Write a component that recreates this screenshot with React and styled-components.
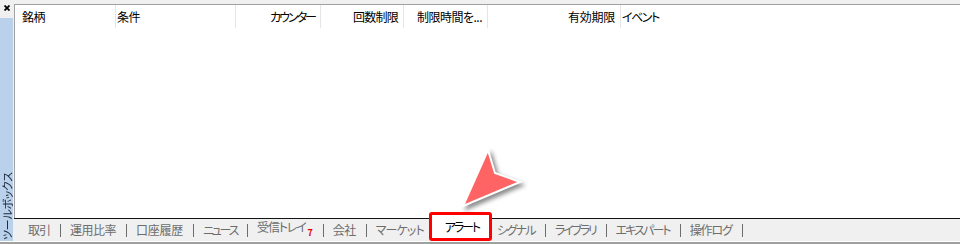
import React from 'react'
import styled, { createGlobalStyle } from 'styled-components';

const GlobalStyle = createGlobalStyle`
  html, body {
    margin: 0;
    padding: 0;
    background: #ffffff;
  }
`;

const Window = styled.div`
  position: relative;
  width: 960px;
  height: 244px;
  display: flex;
  flex-direction: column;
  background: #f0f0f0;
  font-family: "Noto Sans CJK JP", "Noto Sans", sans-serif;
  font-size: 12px;
  font-feature-settings: "palt" 1;
  overflow: hidden;
`;

const Body = styled.div`
  flex: 1;
  display: flex;
  min-height: 0;
`;

const BottomEdge = styled.div`
  height: 1px;
  background: #ffffff;
  border-bottom: 2px solid #a0a0a0;
`;

/* 左のツールボックスのタイトルバー */
const Sidebar = styled.div`
  width: 14px;
  display: flex;
  flex-direction: column;
`;

const CloseBtn = styled.div`
  height: 18px;
  padding: 5px 0 0 4px;
  box-sizing: border-box;
  display: flex;
  align-items: flex-start;
`;

const SideStrip = styled.div`
  flex: 1;
  width: 13px;
  background: #b9d1ea;
  display: flex;
  flex-direction: column;
  justify-content: flex-end;
  align-items: center;
`;

const SideTitle = styled.span`
  writing-mode: vertical-rl;
  text-orientation: sideways;
  transform: rotate(180deg);
  font-size: 11px;
  line-height: 12px;
  letter-spacing: -0.3px;
  color: #1b2738;
  padding-top: 1px;
`;

const Main = styled.div`
  flex: 1;
  display: flex;
  flex-direction: column;
`;

const TopStrip = styled.div`
  height: 4px;
`;

const Content = styled.div`
  flex: 1;
  background: #ffffff;
  border-top: 1px solid #a0a0a0;
  border-left: 1px solid #a0a0a0;
`;

const HeaderRow = styled.div`
  display: flex;
  height: 23px;
`;

const HeaderCell = styled.div`
  box-sizing: border-box;
  width: ${p => (p.w ? p.w + 'px' : 'auto')};
  flex: ${p => (p.w ? 'none' : 1)};
  display: flex;
  align-items: center;
  justify-content: ${p => (p.right ? 'flex-end' : 'flex-start')};
  padding: ${p => (p.right ? '0 5px 0 0' : `0 0 0 ${p.pl || 1}px`)};
  border-right: ${p => (p.w ? '1px solid #e5e5e5' : 'none')};
  letter-spacing: ${p => p.ls}px;
  color: #000000;
  white-space: nowrap;
  overflow: hidden;
`;

const TabBar = styled.div`
  height: 22px;
  border-top: 1px solid #141414;
  display: flex;
  align-items: center;
  padding-left: 14px;
`;

const Tab = styled.span`
  color: #6d6d6d;
  white-space: nowrap;
  line-height: 22px;
  letter-spacing: ${p => p.ls}px;
`;

const Sep = styled.span`
  width: 1px;
  height: 13px;
  background: #6d6d6d;
  margin: 0 9px 0 10px;
`;

const ActiveTab = styled.span`
  align-self: flex-start;
  box-sizing: border-box;
  height: 29px;
  margin: -7px 5px 0 5px;
  padding: 0 10px 0 13px;
  display: flex;
  align-items: center;
  background: #ffffff;
  border: 3px solid #ff0000;
  border-radius: 3px;
  color: #000000;
  letter-spacing: ${p => p.ls}px;
  white-space: nowrap;
`;

const Badge = styled.span`
  color: #e00000;
  font-size: 9px;
  font-weight: bold;
  letter-spacing: 0;
  vertical-align: -4px;
  margin-left: 2px;
`;

const Pointer = styled.svg`
  position: absolute;
  left: 455px;
  top: 145px;
  width: 75px;
  height: 70px;
  overflow: visible;
  filter: drop-shadow(3px 3px 2px rgba(0, 0, 0, 0.45));
`;

const columns = [
  { label: '銘柄', w: 101, pl: 7, ls: -0.5 },
  { label: '条件', w: 120, ls: -0.5 },
  { label: 'カウンター', w: 85, right: true, ls: -2 },
  { label: '回数制限', w: 83, right: true, ls: -0.75 },
  { label: '制限時間を...', w: 84, right: true, ls: -0.5 },
  { label: '有効期限', w: 133, right: true, ls: -0.25 },
  { label: 'イベント', ls: -1.5 },
];

const leftTabs = [
  { label: '取引', ls: -1 },
  { label: '運用比率', ls: -0.5 },
  { label: '口座履歴', ls: -0.25 },
  { label: 'ニュース', ls: -2.3 },
  { label: '受信トレイ', ls: -1.2, badge: 7 },
  { label: '会社', ls: -0.5 },
  { label: 'マーケット', ls: -0.9 },
];

const rightTabs = [
  { label: 'シグナル', ls: -1.7 },
  { label: 'ライブラリ', ls: -2.2 },
  { label: 'エキスパート', ls: -1.9 },
  { label: '操作ログ', ls: -1.2 },
];

function App() {
  return (
    <Window>
      <GlobalStyle />
      <Body>
        <Sidebar>
          <CloseBtn>
            <svg width="6" height="6" viewBox="0 0 6 6">
              <path d="M0.5 0.5 L5.5 5.5 M5.5 0.5 L0.5 5.5" stroke="#000" strokeWidth="1.8" />
            </svg>
          </CloseBtn>
          <SideStrip>
            <SideTitle>ツールボックス</SideTitle>
          </SideStrip>
        </Sidebar>
        <Main>
          <TopStrip />
          <Content>
            <HeaderRow>
              {columns.map(c => (
                <HeaderCell key={c.label} w={c.w} right={c.right} pl={c.pl} ls={c.ls}>
                  {c.label}
                </HeaderCell>
              ))}
            </HeaderRow>
          </Content>
          <TabBar>
            {leftTabs.map((t, i) => (
              <React.Fragment key={t.label}>
                <Tab ls={t.ls}>
                  {t.label}
                  {t.badge && <Badge>{t.badge}</Badge>}
                </Tab>
                {i < leftTabs.length - 1 && <Sep />}
              </React.Fragment>
            ))}
            <ActiveTab ls={-2.1}>アラート</ActiveTab>
            {rightTabs.map(t => (
              <React.Fragment key={t.label}>
                <Tab ls={t.ls}>{t.label}</Tab>
                <Sep />
              </React.Fragment>
            ))}
          </TabBar>
        </Main>
      </Body>
      <BottomEdge />
      <Pointer viewBox="0 0 75 70">
        <polygon
          points="8,61 33,5 40,28 65,37"
          fill="#ff6464"
          stroke="#ffffff"
          strokeWidth="2"
          strokeLinejoin="miter"
        />
      </Pointer>
    </Window>
  );
}

export default App;
